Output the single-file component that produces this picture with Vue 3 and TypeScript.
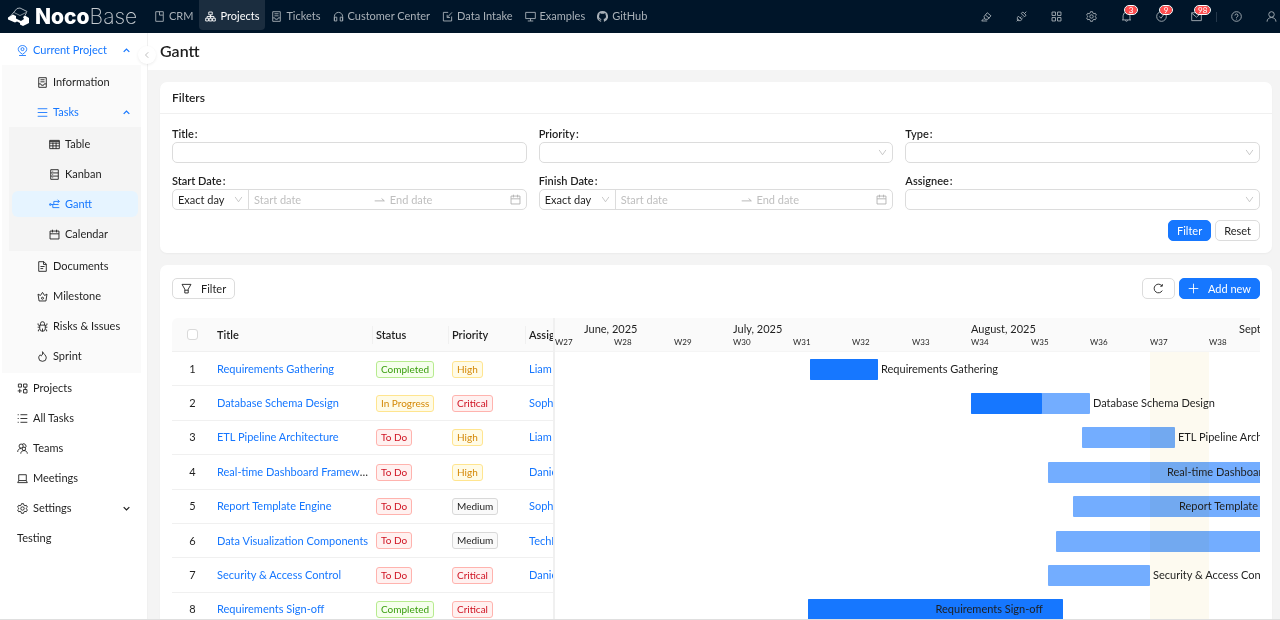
<script setup lang="ts">
import { h } from 'vue'

const shapes: Record<string, string[]> = {
  file: ['M2.5 1h11v14h-11z', 'M8 1v5h5'],
  cluster: ['M5.5 1.5h5v4h-5z', 'M1 10.5h4v4H1z', 'M6 10.5h4v4H6z', 'M11 10.5h4v4h-4z', 'M8 5.5v5', 'M3 10.5V8h10v2.5'],
  book: ['M2.5 1h11v14h-11z', 'M2.5 10h3l1 2h3l1-2h3', 'M5 4h6M5 7h6'],
  headset: ['M2 14V8a6 6 0 0 1 12 0v6', 'M2 9h3.5v5.5H2z', 'M10.500 9H14v5.500h-3.500z'],
  form: ['M9 2H2v12.500h12V8', 'M14.500 2 8 9', 'M7.500 5.500V9.500h4'],
  desktop: ['M1 2h14v9H1z', 'M8 11v3.500M4 14.500h8'],
  highlight: ['M1 14.500h8', 'M4 11l-3 3.500', 'M4.500 8 9 2.500l5.500 4.500L10 12H5.500z', 'M6.500 6l5.500 4.500'],
  plugin: ['M1 15l3-3M12 4l3-3', 'M7.500 3.500 10 1.500l4.500 4.500-2 2.500z', 'M3.500 7.500 8.500 12.500l-2 1.500H3l-1-1V9.500z', 'M6 10l2-2M8 11.500l2-2'],
  grid: ['M1.500 1.500h5v5h-5z', 'M9.500 1.500h5v5h-5z', 'M1.500 9.500h5v5h-5z', 'M9.500 9.500h5v5h-5z'],
  gear: ['M6.500 1h3l.6 2.200 1.300.800 2.200-.600 1.500 2.600L13.500 7.500v1l1.600 1.600-1.500 2.600-2.200-.600-1.300.800L9.500 15h-3l-.6-2.100-1.300-.800-2.200.600L.900 10.100 2.500 8.500v-1L.900 6l1.500-2.600 2.200.600 1.300-.800z', 'M10.500 8a2.500 2.500 0 1 1-5 0 2.500 2.500 0 0 1 5 0z'],
  bell: ['M1.500 13h13', 'M3 13V7a5 5 0 0 1 10 0v6', 'M8 2V.500', 'M6.500 13.500a1.500 1.500 0 0 0 3 0'],
  check: ['M15 8A7 7 0 1 1 8 1a7 7 0 0 1 7 7z', 'M5 8l2.200 2.500L11 5.500'],
  mail: ['M1 2.500h14v11.500H1z', 'M1 3l7 6 7-6'],
  help: ['M15 8A7 7 0 1 1 8 1a7 7 0 0 1 7 7z', 'M5.800 6.500a2.200 2.200 0 1 1 3.200 2C8.200 9 8 9.200 8 10', 'M8 11.200v1.200'],
  user: ['M12 5a4 4 0 1 1-8 0 4 4 0 0 1 8 0z', 'M1.500 15.500c0-8 13-8 13 0'],
  pin: ['M8 13.500C-3 7 3 .700 8 .700s11 6.300 0 12.800z', 'M10.200 6a2.200 2.200 0 1 1-4.400 0 2.200 2.200 0 0 1 4.400 0z', 'M3 15.300h10'],
  menu: ['M1 2.500h14M1 8h14M1 13.500h14'],
  table: ['M1 2h14v12H1z', 'M1 3.500h14M1 6h14M1 10h14M5.700 5v9M10.300 5v9'],
  kanban: ['M2.500 1h11v14h-11z', 'M2.500 5.700h11M2.500 10.300h11M5 3.300h1M5 8h1M5 12.700h1'],
  gantt: ['M1 7h2v2H1z', 'M3 8h4V3.500h8', 'M12.500 1l2.500 2.500-2.500 2.500', 'M7 8h7', 'M5.500 8v4.500h9.500'],
  calendar: ['M1.500 3h13v11.500h-13z', 'M1.500 7h13M5 1v4M11 1v4'],
  doc: ['M2.500 1H10l3.500 3.500V15h-11z', 'M9.500 1v4h4M5 8h6M5 11h4'],
  crown: ['M3 14.500h10L14.500 4.500 11 6.500 8 2 5 6.500 1.500 4.500z', 'M9.500 10.500a1.500 1.500 0 1 1-3 0 1.500 1.500 0 0 1 3 0z'],
  bug: ['M4 6h8v5a4 4 0 0 1-8 0z', 'M5 6V4a3 3 0 0 1 6 0v2', 'M1 9h3M12 9h3M1.500 3.500v2L4 7M14.500 3.500v2L12 7M2 15v-2l2-1.500M14 15v-2l-2-1.500M8 11v4'],
  fire: ['M8 1c1 3 5.500 5 5.500 9a5.500 5 0 0 1-11 0c0-2 1-3.500 2.200-4.500.300 1 .800 1.500 1.500 1.500C8.200 6 8.500 3 8 1z'],
  apps: ['M2 1.500h4.500v4.500H2z', 'M9.500 1.500h5v4.500h-5z', 'M9.500 9.500h5v5h-5z', 'M1 11.500h6M4 8.500v6', 'M12 6v3.500'],
  list: ['M5 2.500h10M5 8h10M5 13.500h10M1 2.500h1.500M1 8h1.500M1 13.500h1.500'],
  team: ['M9 4.500a3 3 0 1 1-6 0 3 3 0 0 1 6 0z', 'M1 13c0-3 2-5 5-5', 'M7.500 2a3 3 0 0 1 4.500 5', 'M12.500 8.500a2.500 2.500 0 1 1-5 0 2.500 2.500 0 0 1 5 0z', 'M5.500 15.500c0-6 9.500-6 9.500 0'],
  laptop: ['M2.500 2.500h11v8.500h-11z', 'M2.500 11 1 14h14l-1.500-3'],
  up: ['M3 10.500 8 5.500l5 5'],
  down: ['M3 5.500 8 10.500l5-5'],
  open: ['M2 3.500 8 12l6-8.500'],
  left: ['M10.500 2.500 5 8l5.500 5.500'],
  arrow: ['M1 10h14L11 6.500'],
  funnel: ['M1.500 2h13L10.500 9v5.500h-5V9z', 'M5.500 10.500h5'],
  reload: ['M13.500 11A6.300 6.300 0 1 1 13 4.200', 'M13.500 1.500v3.200h-3'],
  plus: ['M8 1v14M1 8h14'],
}

const Icon = (props: { name: string; weight?: number }) =>
  h(
    'svg',
    {
      class: 'icon',
      viewBox: '0 0 16 16',
      fill: 'none',
      stroke: 'currentColor',
      'stroke-width': props.weight ?? 1.3,
      'aria-hidden': 'true',
    },
    shapes[props.name].map((d) => h('path', { d })),
  )
Icon.props = ['name', 'weight']

const nav = [
  { label: 'CRM', icon: 'file' },
  { label: 'Projects', icon: 'cluster', active: true },
  { label: 'Tickets', icon: 'book' },
  { label: 'Customer Center', icon: 'headset' },
  { label: 'Data Intake', icon: 'form' },
  { label: 'Examples', icon: 'desktop' },
  { label: 'GitHub', icon: 'github' },
]

const tools: { icon: string; label: string; count?: number }[] = [
  { icon: 'highlight', label: 'UI editor' },
  { icon: 'plugin', label: 'Plugins' },
  { icon: 'grid', label: 'Blocks' },
  { icon: 'gear', label: 'Settings' },
  { icon: 'bell', label: 'Notifications', count: 3 },
  { icon: 'check', label: 'Approvals', count: 9 },
  { icon: 'mail', label: 'Mail', count: 98 },
]

const taskViews = [
  { label: 'Table', icon: 'table' },
  { label: 'Kanban', icon: 'kanban' },
  { label: 'Gantt', icon: 'gantt', active: true },
  { label: 'Calendar', icon: 'calendar' },
]
const projectPages = [
  { label: 'Documents', icon: 'doc' },
  { label: 'Milestone', icon: 'crown' },
  { label: 'Risks & Issues', icon: 'bug' },
  { label: 'Sprint', icon: 'fire' },
]
const pages = [
  { label: 'Projects', icon: 'apps' },
  { label: 'All Tasks', icon: 'list' },
  { label: 'Teams', icon: 'team' },
  { label: 'Meetings', icon: 'laptop' },
]

type Field = { id: string; label: string; kind: 'text' | 'select' | 'range' }
const fields: Field[] = [
  { id: 'title', label: 'Title', kind: 'text' },
  { id: 'priority', label: 'Priority', kind: 'select' },
  { id: 'type', label: 'Type', kind: 'select' },
  { id: 'start', label: 'Start Date', kind: 'range' },
  { id: 'finish', label: 'Finish Date', kind: 'range' },
  { id: 'assignee', label: 'Assignee', kind: 'select' },
]

interface Task {
  title: string
  status: string
  priority: string
  assignee: string
  start: number
  days: number
  done: number
  inside?: boolean
}
const tasks: Task[] = [
  { title: 'Requirements Gathering', status: 'Completed', priority: 'High', assignee: 'Liam', start: 30, days: 8, done: 100 },
  { title: 'Database Schema Design', status: 'In Progress', priority: 'Critical', assignee: 'Sophia', start: 49, days: 14, done: 60 },
  { title: 'ETL Pipeline Architecture', status: 'To Do', priority: 'High', assignee: 'Liam', start: 62, days: 11, done: 0 },
  { title: 'Real-time Dashboard Framework', status: 'To Do', priority: 'High', assignee: 'Daniel', start: 58, days: 28, done: 0, inside: true },
  { title: 'Report Template Engine', status: 'To Do', priority: 'Medium', assignee: 'Sophia', start: 61, days: 25, done: 0, inside: true },
  { title: 'Data Visualization Components', status: 'To Do', priority: 'Medium', assignee: 'TechNova', start: 59, days: 54, done: 0, inside: true },
  { title: 'Security & Access Control', status: 'To Do', priority: 'Critical', assignee: 'Daniel', start: 58, days: 12, done: 0 },
  { title: 'Requirements Sign-off', status: 'Completed', priority: 'Critical', assignee: '', start: 29.8, days: 30, done: 100, inside: true },
]

const tone: Record<string, string> = {
  Completed: 'green',
  'In Progress': 'gold',
  'To Do': 'red',
  High: 'gold',
  Critical: 'red',
  Medium: 'plain',
}

const dayWidth = 8.5
const x = (days: number) => Math.floor(days * dayWidth) + 'px'
const months = [
  { label: 'June, 2025', day: 3.5 },
  { label: 'July, 2025', day: 21 },
  { label: 'August, 2025', day: 49 },
  { label: 'September, 2025', day: 80.5 },
]
const weeks = Array.from({ length: 12 }, (_, i) => ({ label: 'W' + (27 + i), day: i * 7 }))
</script>

<template>
  <div class="app">
    <header class="topbar">
      <a class="logo" href="#" aria-label="NocoBase">
        <svg class="mark" viewBox="0 0 24 20" aria-hidden="true">
          <path d="M1 12 10 1.500 13 1l7 3.500-2 4" fill="none" stroke="#aab3bb" stroke-width="1" />
          <path d="M7 5.500 13 8.500 20 5" fill="none" stroke="#7d8993" stroke-width="1" />
          <path d="M1 10.500 6 7.500l3 1.500v2.500l5 2.500 3-2-1-2 2-1.500 4 2.500v5L16 19l-3-1.500v-1.500l-3-1.500-2 1-7-3z" fill="#fff" />
        </svg>
        <span class="brand"><b>Noco</b><span class="thin">Base</span></span>
      </a>
      <nav class="nav">
        <a v-for="n in nav" :key="n.label" href="#" :class="{ active: n.active }">
          <svg v-if="n.icon === 'github'" class="icon" viewBox="0 0 16 16" fill="currentColor" aria-hidden="true">
            <path d="M8 0a8 8 0 0 0-2.530 15.590c.400.070.550-.170.550-.380v-1.490c-2 .370-2.530-.490-2.690-.940-.090-.230-.480-.940-.820-1.130-.280-.150-.680-.520 0-.530.630 0 1.080.580 1.230.820.720 1.210 1.870.870 2.330.660.070-.520.280-.870.510-1.070-1.780-.200-3.640-.890-3.640-3.950 0-.870.310-1.590.820-2.150-.080-.200-.360-1.020.080-2.120 0 0 .670-.210 2.200.820a7.600 7.600 0 0 1 4 0c1.530-1.040 2.200-.820 2.200-.820.440 1.100.160 1.920.080 2.120.510.560.820 1.270.820 2.150 0 3.070-1.870 3.750-3.650 3.950.290.250.540.730.540 1.480v2.200c0 .210.150.460.550.380A8 8 0 0 0 8 0z" />
          </svg>
          <Icon v-else :name="n.icon" />
          {{ n.label }}
        </a>
      </nav>
      <div class="tools">
        <button v-for="t in tools" :key="t.icon" type="button" :aria-label="t.label">
          <Icon :name="t.icon" />
          <span v-if="t.count" class="badge">{{ t.count }}</span>
        </button>
      </div>
      <div class="tools account">
        <button type="button" aria-label="Help"><Icon name="help" /></button>
        <button type="button" aria-label="Account"><Icon name="user" /></button>
      </div>
    </header>

    <div class="body">
      <aside class="side">
        <ul>
          <li>
            <a href="#" class="item open"><Icon name="pin" />Current Project<Icon class="caret" name="up" :weight="2.2" /></a>
            <ul class="sub">
              <li><a href="#" class="item"><Icon name="book" />Information</a></li>
              <li>
                <a href="#" class="item open"><Icon name="menu" />Tasks<Icon class="caret" name="up" :weight="2.2" /></a>
                <ul class="sub deep">
                  <li v-for="p in taskViews" :key="p.label">
                    <a href="#" class="item" :class="{ selected: p.active }"><Icon :name="p.icon" />{{ p.label }}</a>
                  </li>
                </ul>
              </li>
              <li v-for="p in projectPages" :key="p.label">
                <a href="#" class="item"><Icon :name="p.icon" />{{ p.label }}</a>
              </li>
            </ul>
          </li>
          <li v-for="p in pages" :key="p.label">
            <a href="#" class="item"><Icon :name="p.icon" />{{ p.label }}</a>
          </li>
          <li>
            <a href="#" class="item"><Icon name="gear" />Settings<Icon class="caret" name="down" :weight="2.2" /></a>
          </li>
          <li><a href="#" class="item">Testing</a></li>
        </ul>
        <button class="collapse" type="button" aria-label="Collapse menu"><Icon name="left" /></button>
      </aside>

      <main class="main">
        <div class="page-head"><h1>Gantt</h1></div>
        <div class="content">
          <section class="card">
            <h2>Filters</h2>
            <form class="filters" @submit.prevent>
              <div v-for="f in fields" :key="f.id" class="field">
                <label :for="f.id">{{ f.label }}<span class="colon">:</span></label>
                <input v-if="f.kind === 'text'" :id="f.id" class="box" type="text" />
                <div v-else-if="f.kind === 'select'" class="box pick">
                  <select :id="f.id"></select>
                  <Icon class="chev" name="open" :weight="1.2" />
                </div>
                <div v-else class="box range">
                  <div class="pick mode">
                    <select :id="f.id">
                      <option>Exact day</option>
                    </select>
                    <Icon class="chev" name="open" :weight="1.2" />
                  </div>
                  <input type="text" placeholder="Start date" :aria-label="f.label + ' from'" />
                  <Icon name="arrow" />
                  <input type="text" placeholder="End date" :aria-label="f.label + ' to'" />
                  <Icon name="calendar" />
                </div>
              </div>
              <div class="actions">
                <button class="btn primary" type="submit">Filter</button>
                <button class="btn" type="reset">Reset</button>
              </div>
            </form>
          </section>

          <section class="card block">
            <div class="toolbar">
              <button class="btn" type="button"><Icon name="funnel" />Filter</button>
              <button class="btn refresh" type="button" aria-label="Refresh"><Icon name="reload" /></button>
              <button class="btn primary" type="button"><Icon name="plus" />Add new</button>
            </div>
            <div class="chart">
              <div class="pane">
                <table>
                  <colgroup>
                    <col class="c-no" /><col class="c-title" /><col class="c-status" /><col class="c-prio" /><col class="c-who" />
                  </colgroup>
                  <thead>
                    <tr>
                      <th class="no"><input type="checkbox" aria-label="Select all" /></th>
                      <th>Title</th>
                      <th class="sep">Status</th>
                      <th class="sep">Priority</th>
                      <th class="sep">Assignee</th>
                    </tr>
                  </thead>
                  <tbody>
                    <tr v-for="(t, i) in tasks" :key="t.title">
                      <td class="no">{{ i + 1 }}</td>
                      <td><a href="#">{{ t.title }}</a></td>
                      <td><span class="tag" :class="tone[t.status]">{{ t.status }}</span></td>
                      <td><span class="tag" :class="tone[t.priority]">{{ t.priority }}</span></td>
                      <td><a href="#">{{ t.assignee }}</a></td>
                    </tr>
                  </tbody>
                </table>
              </div>
              <div class="gantt">
                <div class="scale">
                  <span v-for="m in months" :key="m.label" class="month" :style="{ left: x(m.day) }">{{ m.label }}</span>
                  <span v-for="w in weeks" :key="w.label" class="week" :style="{ left: x(w.day) }">{{ w.label }}</span>
                </div>
                <div class="lanes">
                  <div v-for="t in tasks" :key="t.title" class="lane">
                    <div class="bar" :style="{ left: x(t.start), width: x(t.days) }">
                      <div class="done" :style="{ width: t.done + '%' }"></div>
                      <span class="name" :class="{ inside: t.inside }">{{ t.title }}</span>
                    </div>
                  </div>
                  <div class="today" :style="{ left: x(70), width: x(7) }"></div>
                </div>
              </div>
            </div>
          </section>
        </div>
      </main>
    </div>
  </div>
</template>

<style>
body {
  margin: 0;
}
</style>

<style scoped>
.app {
  display: flex;
  flex-direction: column;
  box-sizing: border-box;
  height: 100vh;
  overflow: hidden;
  border-bottom: 1px solid #dfdfdf;
  background: #fff;
  color: #1f1f1f;
  font: 11px/16px Lato, 'Noto Sans', sans-serif;
}
.app *,
.app *::before {
  box-sizing: border-box;
}
a {
  color: inherit;
  text-decoration: none;
}
button,
input,
select {
  margin: 0;
  font: inherit;
  color: inherit;
}
ul {
  margin: 0;
  padding: 0;
  list-style: none;
}
.icon {
  display: block;
  flex: none;
  width: 11px;
  height: 11px;
}

.topbar {
  display: flex;
  flex: none;
  height: 33px;
  background: #001529;
  color: #a9b1b8;
}
.logo {
  display: flex;
  align-items: center;
  gap: 4px;
  width: 148px;
  padding-left: 7px;
  color: #fff;
}
.mark {
  width: 24px;
  height: 20px;
}
.brand {
  font: 21px/30px Inter, 'Liberation Sans', sans-serif;
}
.brand b {
  font-weight: 800;
}
.thin {
  font-weight: 200;
  color: #c5cbd0;
}
.nav {
  display: flex;
  flex: 1;
}
.nav a {
  display: flex;
  align-items: center;
  gap: 4px;
  height: 30px;
  padding: 2px 6px 0;
  border-radius: 0 0 4px 4px;
  white-space: nowrap;
}
.nav .active {
  background: #1b2d3f;
  color: #fff;
}
.tools {
  display: flex;
  align-items: center;
  gap: 24px;
}
.tools button {
  position: relative;
  padding: 0;
  border: 0;
  background: none;
}
.badge {
  position: absolute;
  bottom: 8px;
  left: 4px;
  min-width: 12px;
  padding: 0 3px;
  border-radius: 5px;
  outline: 1px solid #fff;
  background: #ff4d4f;
  color: #fff;
  font-size: 8px;
  line-height: 8px;
}
.account {
  position: relative;
  margin-left: 14px;
  padding: 0 3px 0 15px;
}
.account::before {
  content: '';
  position: absolute;
  left: 0;
  width: 1px;
  height: 10px;
  background: #24374a;
}

.body {
  display: flex;
  flex: 1;
  min-height: 0;
}
.side {
  position: relative;
  flex: none;
  width: 148px;
  padding: 2px 6px 0 2px;
  border-right: 1px solid #f0f0f0;
}
.item {
  display: flex;
  align-items: center;
  gap: 5px;
  height: 26px;
  padding-left: 12px;
  border-radius: 6px;
}
.side li {
  padding: 2px 3px;
}
.side li li {
  padding: 2px 3px 2px 23px;
}
.side li:has(> .sub) {
  padding: 0;
}
.side li:has(> .sub) > .item {
  height: 30px;
  padding: 0 3px 0 15px;
}
.sub {
  padding: 2px 0;
  background: #fafafa;
}
.sub li:has(> .sub) {
  padding-left: 7px;
}
.sub li:has(> .sub) > .item {
  padding-left: 28px;
}
.sub .item {
  padding-left: 12px;
}
.deep {
  background: #f4f4f4;
}
.side .deep li {
  padding: 2px 3px;
}
.deep .item {
  padding-left: 37px;
}
.open {
  color: #1677ff;
}
.selected {
  background: #e6f4ff;
  color: #1677ff;
}
.item .caret {
  width: 9px;
  height: 9px;
  margin: 0 7px 0 auto;
}
.collapse {
  position: absolute;
  top: 13px;
  right: -9px;
  display: grid;
  place-items: center;
  width: 18px;
  height: 18px;
  padding: 0;
  border: 0;
  border-radius: 9px;
  background: #fff;
  box-shadow: 0 1px 3px rgba(0, 0, 0, 0.08);
  color: #999;
}
.collapse .icon {
  width: 8px;
  height: 8px;
}

.main {
  flex: 1;
  min-width: 0;
  background: #f4f4f4;
}
.page-head {
  padding: 8px 12px 9px;
  background: #fff;
}
h1 {
  margin: 0;
  font-size: 16px;
  line-height: 20px;
  font-weight: 600;
}
.content {
  display: flex;
  flex-direction: column;
  gap: 12px;
  padding: 12px 8px 0 12px;
}
.card {
  border-radius: 7px;
  background: #fff;
  box-shadow: 0 1px 2px rgba(0, 0, 0, 0.04);
}
h2 {
  margin: 0;
  padding: 8px 12px 7px;
  border-bottom: 1px solid #f0f0f0;
  font-size: 12px;
  line-height: 16px;
  font-weight: 600;
}
.filters {
  display: grid;
  grid-template-columns: repeat(3, 1fr);
  gap: 10px 12px;
  padding: 12px;
}
.field {
  display: flex;
  flex-direction: column;
  min-width: 0;
}
label {
  font-weight: 600;
}
.colon {
  margin-left: 1px;
}
.box {
  width: 100%;
  height: 21px;
  padding: 0 5px;
  border: 1px solid #dcdcdc;
  border-radius: 5px;
  background: #fff;
}
.pick {
  display: flex;
  align-items: center;
}
.pick select {
  flex: 1;
  width: 100%;
  min-width: 0;
  height: 19px;
  padding: 0;
  border: 0;
  background: none;
  appearance: none;
}
.chev {
  width: 9px;
  height: 9px;
}
.range {
  display: flex;
  align-items: center;
  gap: 5px;
}
.mode {
  width: 71px;
  height: 19px;
  padding-right: 5px;
  border-right: 1px solid #dcdcdc;
}
.range > input {
  flex: 1;
  width: 0;
  padding: 0;
  border: 0;
  background: none;
}
.range input::placeholder {
  color: #bfbfbf;
  opacity: 1;
}
.box .icon {
  color: #b0b0b0;
}
.actions {
  grid-column: 1 / -1;
  display: flex;
  justify-content: flex-end;
  gap: 4px;
}
.btn {
  display: flex;
  align-items: center;
  gap: 9px;
  height: 21px;
  padding: 0 8px;
  border: 1px solid #dcdcdc;
  border-radius: 5px;
  background: #fff;
}
.primary {
  border-color: #1677ff;
  background: #1677ff;
  color: #fff;
}
.refresh {
  padding: 0 10px;
  margin-left: auto;
}

.block {
  padding: 13px 12px 0;
}
.toolbar {
  display: flex;
  gap: 4px;
  padding-bottom: 19px;
}
.chart {
  display: flex;
}
.pane {
  width: 383px;
  flex: none;
  overflow: hidden;
  border-right: 2px solid #f0f0f0;
}
table {
  width: 454px;
  height: 309px;
  table-layout: fixed;
  border-spacing: 0;
}
.c-no {
  width: 41px;
}
.c-title {
  width: 159px;
}
.c-status {
  width: 76px;
}
.c-prio {
  width: 77px;
}
th,
td {
  overflow: hidden;
  padding: 0 1px 0 4px;
  border-bottom: 1px solid #f0f0f0;
  text-align: left;
  text-overflow: ellipsis;
  white-space: nowrap;
}
th {
  position: relative;
  height: 34px;
  background: #fafafa;
  font-weight: 600;
}
th:first-child {
  border-top-left-radius: 6px;
}
.sep::before {
  content: '';
  position: absolute;
  top: 8px;
  left: 0;
  width: 1px;
  height: 18px;
  background: #f0f0f0;
}
.no {
  padding: 0;
  text-align: center;
}
td a {
  color: #1677ff;
}
input[type='checkbox'] {
  display: block;
  width: 11px;
  height: 11px;
  margin: 0 auto;
  border: 1px solid #d9d9d9;
  border-radius: 3px;
  background: #fff;
  appearance: none;
}
.tag {
  display: inline-block;
  padding: 0 4px;
  border: 1px solid;
  border-radius: 3px;
  font-size: 10px;
  line-height: 15px;
  vertical-align: middle;
}
.green {
  border-color: #b7eb8f;
  background: #f6ffed;
  color: #389e0d;
}
.gold {
  border-color: #ffe58f;
  background: #fffbe6;
  color: #d48806;
}
.red {
  border-color: #ffb3ae;
  background: #fff1f0;
  color: #cf1322;
}
.plain {
  border-color: #d9d9d9;
  background: #fafafa;
}

.gantt {
  flex: 1;
  min-width: 0;
  overflow: hidden;
}
.scale {
  position: relative;
  height: 34px;
  border-bottom: 1px solid #f5f5f5;
  background: #fafafa;
}
.month,
.week {
  position: absolute;
  white-space: nowrap;
}
.month {
  top: 3px;
}
.week {
  bottom: 1px;
  font-size: 8px;
}
.lanes {
  position: relative;
  display: flex;
  flex-direction: column;
  height: 275px;
}
.lane {
  position: relative;
  flex: 1;
  display: flex;
  align-items: center;
}
.bar {
  position: relative;
  flex: none;
  height: 21px;
  border-radius: 1px;
  background: #73adff;
}
.done {
  height: 21px;
  border-radius: 1px;
  background: #1677ff;
}
.name {
  position: absolute;
  top: 2px;
  left: 100%;
  padding-left: 3px;
  white-space: nowrap;
}
.inside {
  left: 50%;
  padding-left: 0;
}
.today {
  position: absolute;
  top: 0;
  bottom: 0;
  background: #fdfaf0;
  mix-blend-mode: multiply;
}
</style>
